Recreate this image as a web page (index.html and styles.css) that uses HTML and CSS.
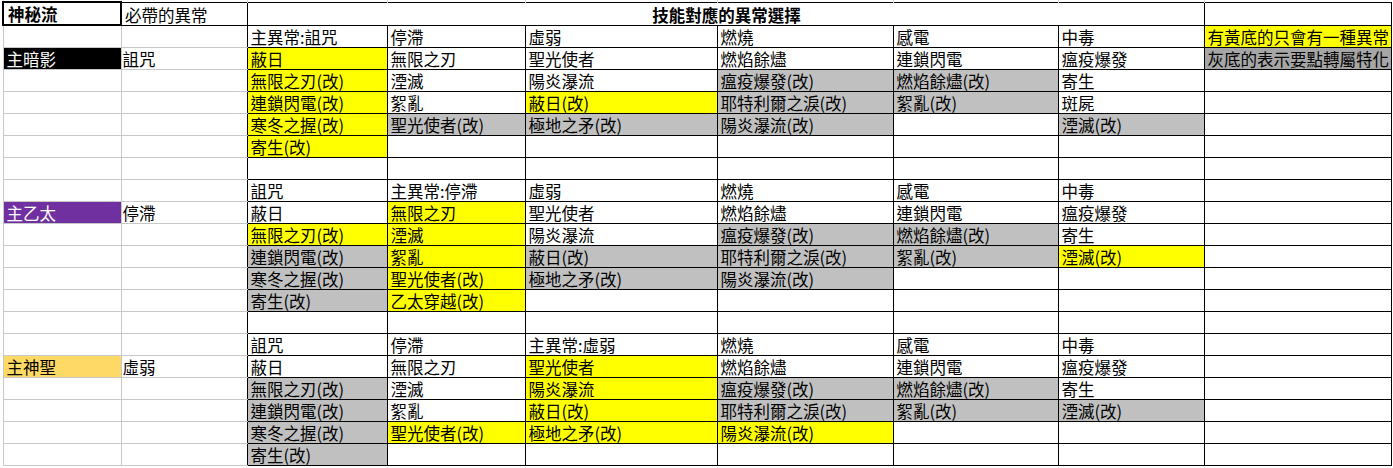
FILE: index.html
```html
<!DOCTYPE html>
<html lang="zh-Hant">
<head>
<meta charset="utf-8">
<title>神秘流</title>
<link rel="stylesheet" href="styles.css">
</head>
<body>
<table class="sheet">
<colgroup>
<col class="wa"><col class="wb"><col class="wc"><col class="wd"><col class="we"><col class="wf"><col class="wg"><col class="wh"><col class="wi">
</colgroup>
<tbody>
<tr class="sliver"><td></td><td></td><td></td><td></td><td></td><td></td><td></td><td></td><td></td></tr>
<tr class="hd"><td class="title">神秘流</td><td>必帶的異常</td><td colspan="6" class="merged">技能對應的異常選擇</td><td></td></tr>

<tr class="r"><td></td><td></td><td>主異常:詛咒</td><td>停滯</td><td>虛弱</td><td>燃燒</td><td>感電</td><td>中毒</td><td class="y">有黃底的只會有一種異常</td></tr>
<tr class="r"><td class="blk">主暗影</td><td>詛咒</td><td class="y">蔽日</td><td>無限之刃</td><td>聖光使者</td><td>燃焰餘燼</td><td>連鎖閃電</td><td>瘟疫爆發</td><td class="d">灰底的表示要點轉屬特化</td></tr>
<tr class="r"><td></td><td></td><td class="y">無限之刃(改)</td><td>湮滅</td><td>陽炎瀑流</td><td class="s">瘟疫爆發(改)</td><td class="s">燃焰餘燼(改)</td><td>寄生</td><td></td></tr>
<tr class="r"><td></td><td></td><td class="y">連鎖閃電(改)</td><td>絮亂</td><td class="y">蔽日(改)</td><td class="s">耶特利爾之淚(改)</td><td class="s">絮亂(改)</td><td>斑屍</td><td></td></tr>
<tr class="r"><td></td><td></td><td class="y">寒冬之握(改)</td><td class="s">聖光使者(改)</td><td class="s">極地之矛(改)</td><td class="s">陽炎瀑流(改)</td><td></td><td class="s">湮滅(改)</td><td></td></tr>
<tr class="r"><td></td><td></td><td class="y">寄生(改)</td><td></td><td></td><td></td><td></td><td></td><td></td></tr>
<tr class="r"><td></td><td></td><td></td><td></td><td></td><td></td><td></td><td></td><td></td></tr>

<tr class="r"><td></td><td></td><td>詛咒</td><td>主異常:停滯</td><td>虛弱</td><td>燃燒</td><td>感電</td><td>中毒</td><td></td></tr>
<tr class="r"><td class="pur">主乙太</td><td>停滯</td><td>蔽日</td><td class="y">無限之刃</td><td>聖光使者</td><td>燃焰餘燼</td><td>連鎖閃電</td><td>瘟疫爆發</td><td></td></tr>
<tr class="r"><td></td><td></td><td class="y">無限之刃(改)</td><td class="y">湮滅</td><td>陽炎瀑流</td><td class="s">瘟疫爆發(改)</td><td class="s">燃焰餘燼(改)</td><td>寄生</td><td></td></tr>
<tr class="r"><td></td><td></td><td class="s">連鎖閃電(改)</td><td class="y">絮亂</td><td class="s">蔽日(改)</td><td class="s">耶特利爾之淚(改)</td><td class="s">絮亂(改)</td><td class="y">湮滅(改)</td><td></td></tr>
<tr class="r"><td></td><td></td><td class="s">寒冬之握(改)</td><td class="y">聖光使者(改)</td><td class="s">極地之矛(改)</td><td class="s">陽炎瀑流(改)</td><td></td><td></td><td></td></tr>
<tr class="r"><td></td><td></td><td class="s">寄生(改)</td><td class="y">乙太穿越(改)</td><td></td><td></td><td></td><td></td><td></td></tr>
<tr class="r"><td></td><td></td><td></td><td></td><td></td><td></td><td></td><td></td><td></td></tr>

<tr class="r"><td></td><td></td><td>詛咒</td><td>停滯</td><td>主異常:虛弱</td><td>燃燒</td><td>感電</td><td>中毒</td><td></td></tr>
<tr class="r"><td class="gold">主神聖</td><td>虛弱</td><td>蔽日</td><td>無限之刃</td><td class="y">聖光使者</td><td>燃焰餘燼</td><td>連鎖閃電</td><td>瘟疫爆發</td><td></td></tr>
<tr class="r"><td></td><td></td><td class="s">無限之刃(改)</td><td>湮滅</td><td class="y">陽炎瀑流</td><td class="s">瘟疫爆發(改)</td><td class="s">燃焰餘燼(改)</td><td>寄生</td><td></td></tr>
<tr class="r"><td></td><td></td><td class="s">連鎖閃電(改)</td><td>絮亂</td><td class="y">蔽日(改)</td><td class="s">耶特利爾之淚(改)</td><td class="s">絮亂(改)</td><td class="s">湮滅(改)</td><td></td></tr>
<tr class="r"><td></td><td></td><td class="s">寒冬之握(改)</td><td class="y">聖光使者(改)</td><td class="y">極地之矛(改)</td><td class="y">陽炎瀑流(改)</td><td></td><td></td><td></td></tr>
<tr class="r"><td></td><td></td><td class="s">寄生(改)</td><td></td><td></td><td></td><td></td><td></td><td></td></tr>
</tbody>
</table>
</body>
</html>
```

FILE: styles.css
```css
html, body {
  margin: 0;
  padding: 0;
  background: #fff;
}

body {
  padding-left: 2px;
  font-family: "Noto Sans CJK TC", "Noto Sans CJK SC", sans-serif;
  font-size: 16.5px;
  color: #000;
}

.sheet {
  border-collapse: collapse;
  table-layout: fixed;
  width: 1388px;
}

.wa { width: 118px; }
.wb { width: 126px; }
.wc { width: 140px; }
.wd { width: 138px; }
.we { width: 192px; }
.wf { width: 176px; }
.wg { width: 165px; }
.wh { width: 146px; }
.wi { width: 187px; }

.sheet td {
  padding: 0 1px 0 3px;
  line-height: 20px;
  vertical-align: bottom;
  white-space: nowrap;
  border: 1px solid #000;
}

.sliver { height: 2px; }
.sliver td {
  padding: 0;
  line-height: 0;
  border: none;
  border-left: 1px solid #d4d4d4;
}

.hd { height: 23px; }
.hd .title {
  border: 2px solid #000;
  font-weight: bold;
  padding-left: 4px;
}
.hd .merged {
  text-align: center;
  font-weight: bold;
}

.r { height: 22px; }
.r > td:nth-child(1) {
  border: 1px solid #c8c8c8;
  border-top: none;
}
.r > td:nth-child(2) {
  border: none;
  border-bottom: 1px solid #c8c8c8;
  padding-left: 1px;
}

.y { background: #ffff00; }
.s { background: #c0c0c0; }
.d { background: #a6a6a6; }
.r > td.blk { background: #000; color: #fff; }
.r > td.pur { background: #7030a0; color: #fff; }
.r > td.gold { background: #ffd966; }
```
